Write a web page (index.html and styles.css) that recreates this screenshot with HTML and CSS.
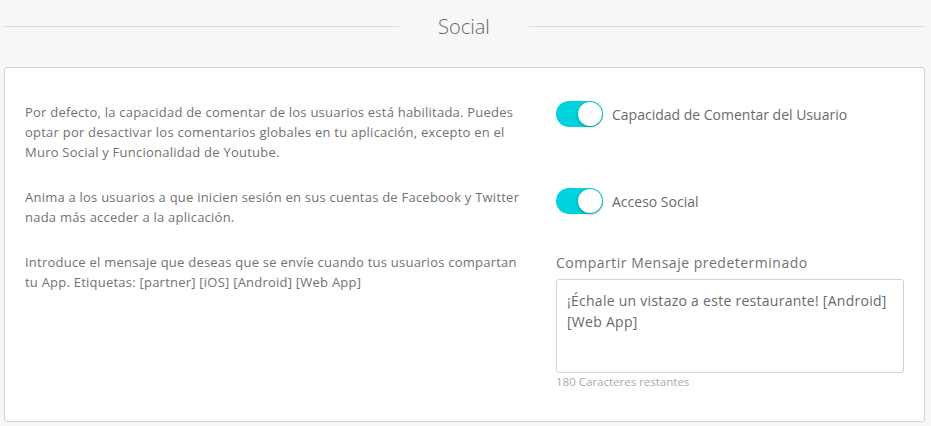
FILE: index.html
```html
<!DOCTYPE html>
<html lang="es">
<head>
<meta charset="utf-8">
<title>Social</title>
<link rel="stylesheet" href="styles.css">
</head>
<body>
<div class="page">
  <div class="section-title">
    <span class="rule"></span>
    <h2>Social</h2>
    <span class="rule"></span>
  </div>
  <div class="card">
    <div class="row">
      <p class="desc">Por defecto, la capacidad de comentar de los usuarios está habilitada. Puedes optar por desactivar los comentarios globales en tu aplicación, excepto en el Muro Social y Funcionalidad de Youtube.</p>
      <div class="control">
        <span class="toggle"><span class="knob"></span></span>
        <span class="toggle-label">Capacidad de Comentar del Usuario</span>
      </div>
    </div>
    <div class="row">
      <p class="desc">Anima a los usuarios a que inicien sesión en sus cuentas de Facebook y Twitter nada más acceder a la aplicación.</p>
      <div class="control">
        <span class="toggle"><span class="knob"></span></span>
        <span class="toggle-label">Acceso Social</span>
      </div>
    </div>
    <div class="row">
      <p class="desc">Introduce el mensaje que deseas que se envíe cuando tus usuarios compartan tu App. Etiquetas: [partner] [iOS] [Android] [Web App]</p>
      <div class="field">
        <label class="field-label">Compartir Mensaje predeterminado</label>
        <div class="textarea">¡Échale un vistazo a este restaurante! [Android] [Web App]</div>
        <div class="hint">180 Caracteres restantes</div>
      </div>
    </div>
  </div>
</div>
</body>
</html>
```
FILE: styles.css
```css
* { box-sizing: border-box; }
html, body { margin: 0; padding: 0; }
body {
  background: #f7f7f7;
  font-family: "Open Sans", "Liberation Sans", sans-serif;
  color: #666;
  width: 931px;
  height: 426px;
  overflow: hidden;
}
.page { padding: 0 6px 0 4px; }
.section-title {
  display: flex;
  align-items: center;
  height: 53px;
  margin-left: -1px;
}
.rule {
  flex: 1;
  height: 1px;
  background: #dcdcdc;
}
.section-title h2 {
  margin: 0;
  padding: 0 39px;
  font-weight: 300;
  font-size: 20px;
  color: #666;
  line-height: 26px;
}
.card {
  margin-top: 14px;
  background: #fff;
  border: 1px solid #d2d2d2;
  border-radius: 3px;
  height: 355px;
  padding: 34px 20px 0 20px;
}
.row {
  display: grid;
  grid-template-columns: 502px 1fr;
  column-gap: 29px;
  margin-bottom: 25px;
}
.desc {
  margin: 0;
  font-size: 13px;
  letter-spacing: 0.23px;
  line-height: 20px;
  color: #727272;
}
.control {
  display: flex;
  align-items: center;
  gap: 9px;
  margin-top: -1px;
  height: 26px;
}
.row + .row .control { margin-top: 1px; }
.toggle {
  position: relative;
  width: 47px;
  height: 26px;
  border-radius: 13px;
  background: #00d3dd;
  flex: none;
}
.knob {
  position: absolute;
  right: 1px;
  top: 1px;
  width: 24px;
  height: 24px;
  border-radius: 50%;
  background: #fff;
  box-shadow: 0 1px 3px rgba(0,0,0,0.35);
}
.toggle-label {
  font-size: 14px;
  color: #6a6a6a;
}
.field { display: flex; flex-direction: column; }
.field-label {
  font-size: 14px;
  letter-spacing: 0.5px;
  line-height: 20px;
  color: #727272;
  margin-bottom: 6px;
  margin-top: 1px;
}
.textarea {
  width: 348px;
  height: 94px;
  border: 1px solid #d2d2d2;
  border-radius: 3px;
  padding: 10px 10px;
  font-size: 14px;
  letter-spacing: 0.27px;
  line-height: 21px;
  color: #6a6a6a;
}
.hint {
  font-size: 11.5px;
  color: #aaa;
  margin-top: 1px;
  line-height: 16px;
}
```
